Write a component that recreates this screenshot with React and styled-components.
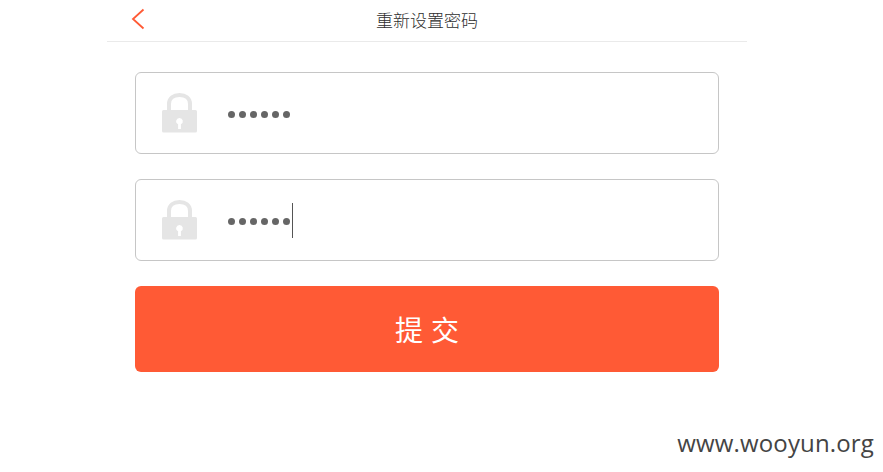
import React from "react";
import styled, { createGlobalStyle } from "styled-components";

const Global = createGlobalStyle`
  html, body { margin: 0; padding: 0; background: #fff; }
  body { font-family: "Liberation Sans", "Noto Sans CJK SC", sans-serif; }
`;
const Page = styled.div`
  position: relative;
  width: 883px;
  height: 472px;
  overflow: hidden;
`;
const Column = styled.main`
  width: 640px;
  margin-left: 107px;
`;
const Header = styled.header`
  display: flex;
  align-items: center;
  justify-content: center;
  position: relative;
  height: 41px;
  border-bottom: 1px solid #eaeaea;
  font-size: 17px;
  color: #2e2e2e;
  font-family: "Noto Sans CJK SC", sans-serif;
  font-weight: 300;
`;
const Title = styled.h1`
  margin: -3px 0 0;
  font: inherit;
`;
const Back = styled.svg`
  position: absolute;
  left: 24px;
  top: 8px;
`;
const Form = styled.form`
  display: flex;
  flex-direction: column;
  gap: 25px;
  padding: 30px 28px 0;
`;
const Field = styled.div`
  display: flex;
  align-items: center;
  height: 80px;
  border: 1px solid #c6c6c6;
  border-radius: 6px;
  padding-left: 26px;
`;
const Lock = styled.svg`
  flex: none;
  margin-top: -1px;
`;
const Dots = styled.span`
  display: flex;
  align-items: center;
  gap: 4px;
  height: 36px;
  margin-left: 30px;
  padding-top: 2px;
`;
const Dot = styled.i`
  width: 7px;
  height: 7px;
  border-radius: 50%;
  background: #666;
`;
const Caret = styled.i`
  width: 1px;
  height: 35px;
  margin: -2px 0 0 -2px;
  background: #555;
`;
const Submit = styled.button`
  height: 86px;
  border: 0;
  border-radius: 6px;
  background: #ff5a35;
  color: #fff;
  font-family: "Noto Sans CJK SC", sans-serif;
  font-size: 28px;
  font-weight: 400;
  line-height: 36px;
  letter-spacing: 8px;
  padding: 0 0 1px 8px;
`;
const Watermark = styled.div`
  position: absolute;
  right: 9px;
  top: 426px;
  font-family: "Open Sans", sans-serif;
  font-size: 24px;
  letter-spacing: 0.15px;
  line-height: 34px;
  color: #444;
`;

const LockIcon = () => (
  <Lock width="36" height="40" viewBox="0 0 36 40">
    <path d="M7 18V11C7 5 11.500 2 17.500 2S28 5 28 11v7" fill="none" stroke="#e5e5e5" strokeWidth="4" />
    <path fillRule="evenodd" fill="#e5e5e5" d="M1.500 17h32a1.500 1.500 0 0 1 1.500 1.500V38a1.500 1.500 0 0 1-1.500 1.500h-32A1.500 1.500 0 0 1 0 38V18.500A1.500 1.500 0 0 1 1.500 17zM17.500 25a3.300 3.300 0 0 0-1.400 6.300V36h2.800v-4.700A3.300 3.300 0 0 0 17.500 25z" />
  </Lock>
);

const Password = ({ caret }) => (
  <Dots>
    {[0, 1, 2, 3, 4, 5].map((i) => <Dot key={i} />)}
    {caret && <Caret />}
  </Dots>
);

export default function App() {
  return (
    <Page>
      <Global />
      <Column>
        <Header>
          <Back width="14" height="22" viewBox="0 0 14 22">
            <path d="M12.500 1.500 2 11l10.500 9.500" fill="none" stroke="#ff5a35" strokeWidth="1.800" />
          </Back>
          <Title>重新设置密码</Title>
        </Header>
        <Form>
          <Field><LockIcon /><Password /></Field>
          <Field><LockIcon /><Password caret /></Field>
          <Submit type="button">提交</Submit>
        </Form>
      </Column>
      <Watermark>www.wooyun.org</Watermark>
    </Page>
  );
}
